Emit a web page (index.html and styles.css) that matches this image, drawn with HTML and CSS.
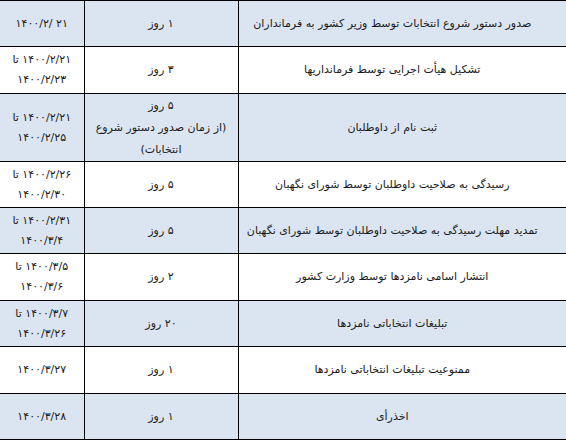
FILE: index.html
```html
<!DOCTYPE html>
<html lang="fa" dir="rtl">
<head>
<meta charset="utf-8">
<title>زمان‌بندی انتخابات</title>
<link rel="stylesheet" href="styles.css">
</head>
<body>
<table class="schedule">
  <colgroup>
    <col class="c-title">
    <col class="c-dur">
    <col class="c-date">
  </colgroup>
  <tbody>
    <tr class="r46 shade">
      <td class="title">صدور دستور شروع انتخابات توسط وزیر کشور به فرمانداران</td>
      <td class="dur">۱ روز</td>
      <td class="date"><span class="ltr">۱۴۰۰/۲/ ۲۱</span></td>
    </tr>
    <tr class="r47">
      <td class="title">تشکیل هیأت اجرایی توسط فرمانداریها</td>
      <td class="dur">۳ روز</td>
      <td class="date">۱۴۰۰/۲/۲۱ تا ۱۴۰۰/۲/۲۳</td>
    </tr>
    <tr class="r68 shade">
      <td class="title">ثبت نام از داوطلبان</td>
      <td class="dur multi">۵ روز<br>(از زمان صدور دستور شروع انتخابات)</td>
      <td class="date">۱۴۰۰/۲/۲۱ تا ۱۴۰۰/۲/۲۵</td>
    </tr>
    <tr class="r46">
      <td class="title">رسیدگی به صلاحیت داوطلبان توسط شورای نگهبان</td>
      <td class="dur">۵ روز</td>
      <td class="date">۱۴۰۰/۲/۲۶ تا ۱۴۰۰/۲/۳۰</td>
    </tr>
    <tr class="r46 shade">
      <td class="title">تمدید مهلت رسیدگی به صلاحیت داوطلبان توسط شورای نگهبان</td>
      <td class="dur">۵ روز</td>
      <td class="date">۱۴۰۰/۲/۳۱ تا ۱۴۰۰/۳/۴</td>
    </tr>
    <tr class="r47">
      <td class="title">انتشار اسامی نامزدها توسط وزارت کشور</td>
      <td class="dur">۲ روز</td>
      <td class="date">۱۴۰۰/۳/۵ تا ۱۴۰۰/۳/۶</td>
    </tr>
    <tr class="r46 shade">
      <td class="title">تبلیغات انتخاباتی نامزدها</td>
      <td class="dur">۲۰ روز</td>
      <td class="date">۱۴۰۰/۳/۷ تا ۱۴۰۰/۳/۲۶</td>
    </tr>
    <tr class="r47">
      <td class="title">ممنوعیت تبلیغات انتخاباتی نامزدها</td>
      <td class="dur">۱ روز</td>
      <td class="date">۱۴۰۰/۳/۲۷</td>
    </tr>
    <tr class="r46 shade">
      <td class="title">اخذرأی</td>
      <td class="dur">۱ روز</td>
      <td class="date">۱۴۰۰/۳/۲۸</td>
    </tr>
  </tbody>
</table>
</body>
</html>
```

FILE: styles.css
```css
html, body {
  margin: 0;
  padding: 0;
  background: #ffffff;
}

body {
  font-family: "DejaVu Sans", "Noto Sans", sans-serif;
  font-size: 11px;
  color: #1a1a1a;
}

.schedule {
  width: 566px;
  border-collapse: collapse;
  table-layout: fixed;
  direction: rtl;
}

.c-title { width: 328px; }
.c-dur { width: 154px; }
.c-date { width: 84px; }

.schedule td {
  border-top: 1px solid #000;
  border-bottom: 1px solid #000;
  vertical-align: middle;
  text-align: center;
  padding: 0;
  line-height: 20px;
}

.schedule td.title,
.schedule td.dur {
  border-left: 1px solid #000;
}

.shade td {
  background: #dbe5f1;
}

.r46 { height: 46px; }
.r47 { height: 47px; }
.r68 { height: 68px; }

.title {
  padding-right: 20px !important;
}

.dur {
  padding: 0 8px !important;
}

.dur.multi {
  line-height: 22px;
}

.date {
  padding: 0 6px !important;
}

.ltr {
  direction: ltr;
  unicode-bidi: isolate;
}
```
